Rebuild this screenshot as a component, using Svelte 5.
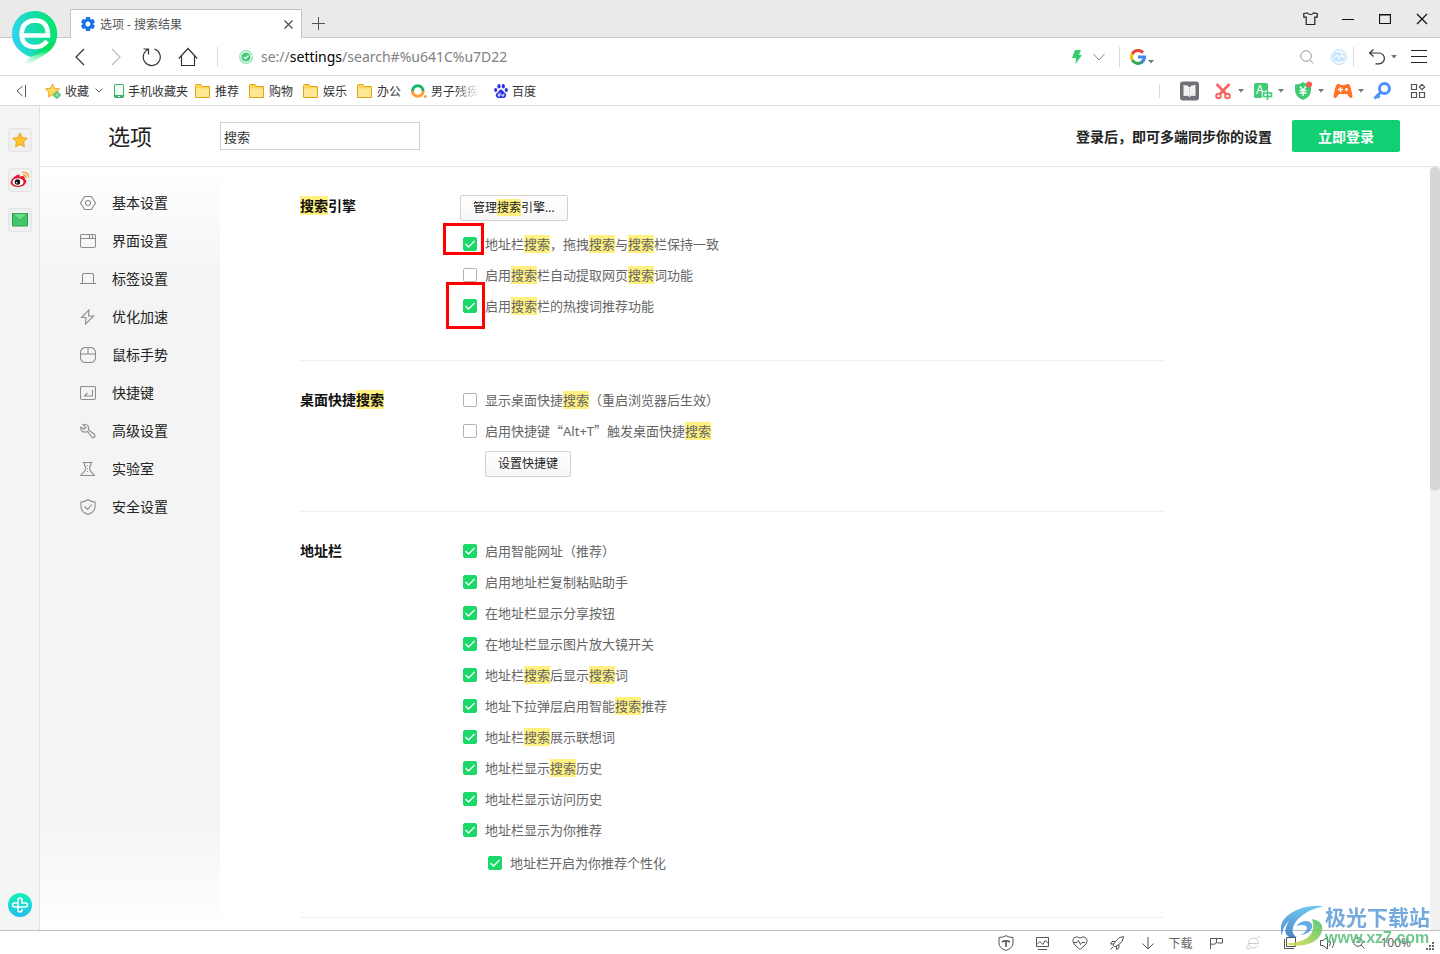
<script lang="ts">
  interface Option {
    text: string;
    checked: boolean;
    nested?: boolean;
    ring?: "wide" | "tall";
  }

  interface Section {
    title: string;
    before?: string;
    options: Option[];
    after?: string;
  }

  const menu = [
    { label: "基本设置", d: "M4.500 1.500h7l4 6.500-4 6.500h-7L.5 8zM8 5.500a2.500 2.500 0 1 0 0 5 2.500 2.500 0 0 0 0-5z" },
    { label: "界面设置", d: "M2 1.500h12q1.500 0 1.500 1.500v10q0 1.500-1.500 1.500H2Q.5 14.500.5 13V3Q.5 1.500 2 1.500zM.5 5.500h15M9.500 2v3M12.500 2v3" },
    { label: "标签设置", d: "M0 12.500h16M2.500 12V3.500q0-1 1-1h9q1 0 1 1V12" },
    { label: "优化加速", d: "M9 .8L1.500 8.500H6L5.500 15.200 13.500 7H8.500z" },
    { label: "鼠标手势", d: "M6 .5h4q5 0 5.500 5v5q-.5 5-5.500 5H6q-5 0-5.500-5v-5Q1 .5 6 .5zM.5 7h15M8 .5V7" },
    { label: "快捷键", d: "M2 1.500h12q1.500 0 1.500 1.500v10q0 1.500-1.500 1.500H2Q.5 14.500.5 13V3Q.5 1.500 2 1.500zM12.500 5v6h-8l3-3" },
    { label: "高级设置", d: "M3 1.700Q6 .5 8 3q1 2 .3 3.700l6 4.500q1.500 1.500 0 2.800t-2.700 0L7.500 8.500Q4.500 10 2 8 0 6 1 4l3 2.200L6 4.500z" },
    { label: "实验室", d: "M2.500 1.500h10M4.500 2v2.500l1 1V9L.8 14.500h13.500L9.800 9V5.500l1-1V2M7.500 4v1M7.500 7v1M7.500 10v1" },
    { label: "安全设置", d: "M8 .5Q11 3 15 3v5q0 5-7 7.500Q1 13 1 8V3q4 0 7-2.500zM4.500 7.500l3 3 4.500-5" },
  ];

  const folders = ["推荐", "购物", "娱乐", "办公"];

  let keyword = $state("搜索");
  let query = $state("");

  let sections: Section[] = $state([
    {
      title: "搜索引擎",
      before: "管理搜索引擎...",
      options: [
        { text: "地址栏搜索，拖拽搜索与搜索栏保持一致", checked: true, ring: "wide" },
        { text: "启用搜索栏自动提取网页搜索词功能", checked: false },
        { text: "启用搜索栏的热搜词推荐功能", checked: true, ring: "tall" },
      ],
    },
    {
      title: "桌面快捷搜索",
      options: [
        { text: "显示桌面快捷搜索（重启浏览器后生效）", checked: false },
        { text: "启用快捷键“Alt+T”触发桌面快捷搜索", checked: false },
      ],
      after: "设置快捷键",
    },
    {
      title: "地址栏",
      options: [
        { text: "启用智能网址（推荐）", checked: true },
        { text: "启用地址栏复制粘贴助手", checked: true },
        { text: "在地址栏显示分享按钮", checked: true },
        { text: "在地址栏显示图片放大镜开关", checked: true },
        { text: "地址栏搜索后显示搜索词", checked: true },
        { text: "地址下拉弹层启用智能搜索推荐", checked: true },
        { text: "地址栏搜索展示联想词", checked: true },
        { text: "地址栏显示搜索历史", checked: true },
        { text: "地址栏显示访问历史", checked: true },
        { text: "地址栏显示为你推荐", checked: true },
        { text: "地址栏开启为你推荐个性化", checked: true, nested: true },
      ],
    },
  ]);

  // full-width quotes have to come from the CJK font, so they get their own part
  function split(text: string) {
    return text.split(/(搜索|“|”)/).filter(Boolean);
  }
</script>

{#snippet highlighted(text: string)}{#each split(text) as part}{#if part === "搜索"}<mark>{part}</mark>{:else if part === "“" || part === "”"}<span class="quote">{part}</span>{:else}{part}{/if}{/each}{/snippet}

{#snippet caret()}
  <svg class="caret" width="6" height="4" viewBox="0 0 6 4"><path d="M0 0h6L3 3.500z" fill="#777" /></svg>
{/snippet}

<div class="window">
  <header class="titlebar">
    <svg class="logo" width="46" height="56" viewBox="0 0 46 56">
      <defs>
        <linearGradient id="lg" x1="0" y1="0.7" x2="1" y2="0.5">
          <stop offset="0" stop-color="#2fd3f3" />
          <stop offset="0.5" stop-color="#18dcb0" />
          <stop offset="1" stop-color="#03e56c" />
        </linearGradient>
        <linearGradient id="tail" x1="0.7" y1="0" x2="0.3" y2="1">
          <stop offset="0.2" stop-color="#03e060" />
          <stop offset="1" stop-color="#19e88a" stop-opacity="0" />
        </linearGradient>
      </defs>
      <path d="M23 0a22.500 22.500 0 0 1 15 39L18 46Q0 38 0 23A22.500 22.500 0 0 1 23 0z" fill="url(#lg)" />
      <path d="M44 30Q42 37 34 43 25 48 13 56l-3-2 23-21z" fill="url(#tail)" />
      <path d="M10 24.500h26Q36 9.500 23 9.500 10 10 9.500 23 10 36 23 36q8 0 12-6" fill="none" stroke="#fff" stroke-width="4.600" />
    </svg>
    <div class="tab">
      <svg width="14" height="14" viewBox="0 0 14 14">
        <path
          fill="#1a73e8"
          fill-rule="evenodd"
          d="M5.200 0h3.600l.5 2 .9.500 2-.6 1.800 3.100-1.500 1.400v1.200L14 9l-1.800 3.100-2-.6-.9.500-.5 2H5.200l-.5-2-.9-.5-2 .6L0 9l1.500-1.400V6.400L0 5l1.800-3.100 2 .6.9-.5zM7 4.500a2.500 2.500 0 1 0 0 5 2.500 2.500 0 0 0 0-5z" />
      </svg>
      <span class="tab-title">选项 - 搜索结果</span>
      <button class="tab-close" aria-label="关闭标签">
        <svg width="9" height="9" viewBox="0 0 9 9"><path d="M.5.5l8 8M8.500.5l-8 8" stroke="#444" stroke-width="1.100" /></svg>
      </button>
    </div>
    <button class="new-tab" aria-label="新标签">
      <svg width="13" height="13" viewBox="0 0 13 13"><path d="M6.500 0v13M0 6.500h13" stroke="#555" /></svg>
    </button>
    <div class="controls">
      <button aria-label="皮肤">
        <svg width="15" height="14" viewBox="0 0 15 14">
          <path d="M4.500 1L.8 1.500v3.700h2.400V12.500h8.600V5.200h2.400V1.500L10.500 1Q9.500 2.500 7.500 2.500T4.500 1z" fill="none" stroke="#222" stroke-width="1.200" />
        </svg>
      </button>
      <button aria-label="最小化">
        <svg width="12" height="12" viewBox="0 0 12 12"><path d="M0 6.500h12" stroke="#111" /></svg>
      </button>
      <button aria-label="最大化">
        <svg width="12" height="12" viewBox="0 0 12 12"><path d="M.5 1.500h11v9H.5zM0 2h12" fill="none" stroke="#111" stroke-width="1.200" /></svg>
      </button>
      <button aria-label="关闭">
        <svg width="12" height="12" viewBox="0 0 12 12"><path d="M1 1l10 10M11 1L1 11" stroke="#111" stroke-width="1.200" /></svg>
      </button>
    </div>
  </header>

  <div class="address">
    <nav class="history">
      <button aria-label="后退">
        <svg width="20" height="20" viewBox="0 0 20 20"><path d="M14 2L6 10l8 8" class="ink" /></svg>
      </button>
      <button aria-label="前进">
        <svg width="20" height="20" viewBox="0 0 20 20"><path d="M6 2l8 8-8 8" class="ink pale" /></svg>
      </button>
      <button aria-label="刷新">
        <svg width="20" height="20" viewBox="0 0 20 20"><path d="M12.500 2a8.500 8.500 0 1 1-6 .2M1.500 2h5v5.500" class="ink" /></svg>
      </button>
      <button aria-label="主页">
        <svg width="20" height="20" viewBox="0 0 20 20"><path d="M.8 11.500L10 1.500l9.200 10M3.500 9v9.500h13V9" class="ink" /></svg>
      </button>
    </nav>
    <i class="rule"></i>
    <svg class="secure" width="14" height="14" viewBox="0 0 14 14">
      <circle cx="7" cy="7" r="6.300" fill="none" stroke="#8ce2ab" stroke-width="1.200" />
      <circle cx="7" cy="7" r="4.600" fill="#43cb76" />
      <path d="M4.800 7l1.700 1.700L9.500 5.500" fill="none" stroke="#fff" stroke-width="1.200" />
    </svg>
    <div class="url" role="textbox" tabindex="0" aria-label="地址" contenteditable="true">se://<b>settings</b>/search#%u641C%u7D22</div>
    <button class="bolt" aria-label="极速模式">
      <svg width="10" height="14" viewBox="0 0 10 14"><path d="M3 0h6L7 5h3L3.500 14 4 8H0z" fill="#35cf70" /></svg>
      <svg width="12" height="8" viewBox="0 0 12 8"><path d="M.5 1L6 7l5.500-6" fill="none" stroke="#888" /></svg>
    </button>
    <i class="rule"></i>
    <form class="search">
      <button class="engine" type="button" aria-label="选择搜索引擎">
        <svg width="16" height="16" viewBox="0 0 16 16" fill="none" stroke-width="3">
          <path d="M13 3.700A6.500 6.500 0 0 0 2.300 5" stroke="#ea4335" />
          <path d="M2.300 5a6.500 6.500 0 0 0 0 6" stroke="#fbbc05" />
          <path d="M2.300 11a6.500 6.500 0 0 0 9.700 2" stroke="#34a853" />
          <path d="M11.500 13.500q3-2.500 3-5.500H8" stroke="#4285f4" />
        </svg>
        {@render caret()}
      </button>
      <input aria-label="搜索网页" bind:value={query} />
      <button class="glass" type="button" aria-label="搜索">
        <svg width="14" height="14" viewBox="0 0 14 14"><circle cx="6" cy="6" r="5.300" fill="none" stroke="#999" /><path d="M10 10l3.500 3.500" stroke="#999" /></svg>
      </button>
    </form>
    <svg class="swirl" width="16" height="16" viewBox="0 0 16 16" fill="none">
      <circle cx="8" cy="8" r="7.400" stroke="#b4dcfa" />
      <circle cx="8" cy="8" r="6" fill="#c3e2fb" />
      <path d="M3 9.500l3-3.500 2 4 2.500-4L13 8.500M5 3.500q4-2 7 1M4 12.500q4 2 7-.5" stroke="#fff" stroke-width="1.100" />
    </svg>
    <i class="rule"></i>
    <button class="undo" aria-label="恢复">
      <svg width="16" height="16" viewBox="0 0 16 16"><path d="M4.500.5l-4 3.500 4 3.500M.5 4H10a5.300 5.300 0 0 1 0 10.800H6.500" class="ink" /></svg>
      {@render caret()}
    </button>
    <button class="burger" aria-label="菜单">
      <svg width="16" height="14" viewBox="0 0 16 14"><path d="M0 .5h16M0 6.500h16M0 12.500h16" stroke="#222" /></svg>
    </button>
  </div>

  <div class="bookmarks">
    <button class="collapse" aria-label="收起">
      <svg width="10" height="12" viewBox="0 0 10 12"><path d="M6.500 1L1 6l5.500 5M9.500 0v12" fill="none" stroke="#555" /></svg>
    </button>
    <button class="mark-item">
      <svg width="16" height="16" viewBox="0 0 16 16">
        <path d="M7.500 1l2.100 4.300 4.900.7-3.500 3.300.8 4.700-4.300-2.200L3.200 14 4 9.300.5 6l4.900-.7z" fill="#ffd95e" stroke="#e9a52a" />
        <path d="M12 8.500v7M8.500 12h7" stroke="#2fb45c" stroke-width="3" />
        <path d="M12 9.500v5M9.500 12h5" stroke="#b6edc8" />
      </svg>
      <span>收藏</span>
      <svg class="down" width="8" height="5" viewBox="0 0 8 5"><path d="M.5.5L4 4 7.500.5" fill="none" stroke="#666" /></svg>
    </button>
    <a class="mark-item phone" href="#mobile">
      <svg width="10" height="14" viewBox="0 0 10 14">
        <rect width="10" height="14" rx="1.500" fill="#35b368" /><rect x="1" y="1" width="8" height="10" fill="#f0fbf4" /><path d="M4 12.500h2" stroke="#fff" />
      </svg>
      <span>手机收藏夹</span>
    </a>
    {#each folders as name}
      <a class="mark-item folder" href="#{name}">
        <svg width="16" height="14" viewBox="0 0 16 14">
          <path d="M.5 13.500V1.500q0-1 1-1H6l1.500 2h7v11z" fill="#ffd55a" stroke="#e0a313" />
          <path d="M1 4.500h13V13H1z" fill="#ffe894" />
        </svg>
        <span>{name}</span>
      </a>
    {/each}
    <a class="mark-item folder" href="#so">
      <svg width="16" height="14" viewBox="0 0 16 14" fill="none" stroke-width="3">
        <path d="M1.500 7a5.300 5.300 0 0 1 10.600 0" stroke="#16b46a" /><path d="M1.500 7a5.300 5.300 0 0 0 10.600 0" stroke="#ff9c33" /><circle cx="14.300" cy="12.500" r="1.500" fill="#ff9c33" stroke="none" />
      </svg>
      <span class="fade">男子残疾佣</span>
    </a>
    <a class="mark-item baidu" href="#baidu">
      <svg width="14" height="14" viewBox="0 0 14 14" fill="#2932e1">
        <ellipse cx="5" cy="2.300" rx="1.600" ry="2.200" /><ellipse cx="9.300" cy="2.300" rx="1.600" ry="2.200" />
        <ellipse cx="1.700" cy="6" rx="1.600" ry="2.100" /><ellipse cx="12.300" cy="6" rx="1.600" ry="2.100" />
        <path d="M7 5.500q1.500 0 2.500 2l2 2q1 1 .6 2.600-.7 2.100-3.100 1.800H5q-2.400.3-3.100-1.800Q1.500 10.500 2.500 9.500l2-2Q5.500 5.500 7 5.500z" />
        <path d="M6 8.500v3.500H4.200V10.300H6M8 10v2h1.800v-2.200" fill="none" stroke="#fff" stroke-width=".9" />
      </svg>
      <span>百度</span>
    </a>

    <div class="tools">
      <i class="rule"></i>
      <button class="book" aria-label="阅读">
        <svg width="20" height="20" viewBox="0 0 20 20">
          <rect width="19" height="19" y=".5" rx="3" fill="#6f7178" />
          <path d="M3.500 4l4 .5 2 2 2-2 4-.5v11l-4-.2-2 1.200-2-1.200-4 .2z" fill="#f2f2f2" /><path d="M9.500 6.500v9" stroke="#d4d4d4" />
        </svg>
      </button>
      <button class="tool" aria-label="截图">
        <svg width="20" height="20" viewBox="0 0 20 20" fill="none" stroke="#f9645f" stroke-width="2">
          <path d="M3.500 3l10 10.500M16.500 3l-10 10.500" stroke-width="2.600" /><circle cx="5.500" cy="15" r="2.300" /><circle cx="14.500" cy="15" r="2.300" />
        </svg>
        {@render caret()}
      </button>
      <button class="tool" aria-label="翻译">
        <svg width="20" height="20" viewBox="0 0 20 20">
          <rect x="1" y="2" width="14" height="15" rx="1.500" fill="#3ecb74" />
          <text x="3" y="13" font-size="12" fill="#fff">A</text>
          <path d="M14.500 9v10M10.500 12h8v3.500h-8z" fill="none" stroke="#fff" stroke-width="3.500" />
          <path d="M14.500 9v10M10.500 12h8v3.500h-8z" fill="none" stroke="#3ecb74" stroke-width="1.600" />
        </svg>
        {@render caret()}
      </button>
      <button class="tool" aria-label="网银">
        <svg width="20" height="20" viewBox="0 0 20 20">
          <path d="M10 1q3 2.500 8 2.500V9q0 7-8 10-8-3-8-10V3.500q5 0 8-2.500z" fill="#3ecb74" />
          <path d="M7 5.500l3 3.500 3-3.500M10 9v6M6.500 9.500h7M6.500 12h7" fill="none" stroke="#fff" stroke-width="1.300" /><circle cx="16" cy="3.500" r="3" fill="#ff5a52" />
        </svg>
        {@render caret()}
      </button>
      <button class="tool" aria-label="游戏">
        <svg width="20" height="20" viewBox="0 0 20 20">
          <path d="M5 3q2 0 3 1h4q1-1 3-1 2 0 3 5l1.500 7q0 2-1.500 2-1.500.2-4-4H6q-2.500 4.200-4 4-1.500 0-1.500-2L2 8q1-5 3-5z" fill="#ff7226" />
          <path d="M7.500 6v5M5 8.500h5" stroke="#fff" stroke-width="1.500" /><circle cx="13.500" cy="8.500" r="1.500" fill="#fff" />
        </svg>
        {@render caret()}
      </button>
      <button class="key" aria-label="密码">
        <svg width="20" height="20" viewBox="0 0 20 20" fill="none" stroke="#4d90fe">
          <circle cx="11.500" cy="7.500" r="5" stroke-width="3" /><path d="M8 11l-6.500 6.500M4 14.500l2.500 2" stroke-width="3" />
        </svg>
      </button>
      <button aria-label="扩展">
        <svg width="16" height="16" viewBox="0 0 16 16" fill="none" stroke="#555">
          <path d="M1.500 1.500h5v5h-5zM1.500 9.500h5v5h-5zM9.500 9.500h5v5h-5zM12 1.300L14.700 4 12 6.700 9.300 4z" stroke-width="1.200" />
        </svg>
      </button>
    </div>
  </div>

  <div class="body">
    <aside class="rail">
      <button class="tile" aria-label="收藏夹">
        <svg width="16" height="16" viewBox="0 0 16 16"><path d="M8 1l2.200 4.600 5 .7-3.700 3.500.9 5L8 12.400l-4.400 2.400.9-5L.8 6.300l5-.7z" fill="#ffc629" stroke="#f39b27" /></svg>
      </button>
      <button class="tile" aria-label="微博">
        <svg width="20" height="18" viewBox="0 0 20 18">
          <path d="M7 4q2-1 2.500 0t0 2q3-1.500 4.500-.5t.5 2.500q2.500 1 1.500 3.500-1.500 4-7.500 4.500-6.500 0-8-4Q.5 8 7 4z" fill="#e6162d" />
          <ellipse cx="8" cy="11" rx="5.500" ry="3.800" fill="#fff" /><circle cx="7.500" cy="11" r="2.700" fill="#111" /><circle cx="6.700" cy="11.700" r=".8" fill="#fff" />
          <path d="M13 4q3-.5 3 3M12.500 1.500q6-.8 6.200 5" fill="none" stroke="#ff9933" stroke-width="1.400" />
        </svg>
      </button>
      <button class="tile" aria-label="邮箱">
        <svg width="16" height="14" viewBox="0 0 16 14"><path d="M.5.5h15v12.500H.5z" fill="#44c76b" stroke="#27a24c" /><path d="M.5.5L8 7.500 15.500.5z" fill="#6bdc8c" stroke="#27a24c" stroke-width=".8" /></svg>
      </button>
      <button class="add" aria-label="添加">
        <svg width="24" height="24" viewBox="0 0 24 24">
          <defs><linearGradient id="ag" x2="0" y2="1"><stop stop-color="#12f3b4" /><stop offset="1" stop-color="#21bdf0" /></linearGradient></defs>
          <circle cx="12" cy="12" r="12" fill="url(#ag)" />
          <path d="M10 14V7q0-2 2-2t2 2v3h3q2.500 0 2.500 2T17 14H7q-2.500 0-2.500-2T7 10h3M10 14v3q0 2 2 2t2-2v-1" fill="none" stroke="#fff" stroke-width="1.500" />
        </svg>
      </button>
    </aside>

    <main class="page">
      <div class="page-head">
        <h1>选项</h1>
        <input class="filter" aria-label="搜索选项" bind:value={keyword} />
        <span class="hint">登录后，即可多端同步你的设置</span>
        <button class="login">立即登录</button>
      </div>

      <div class="columns">
        <nav class="menu">
          {#each menu as item}
            <a href="#{item.label}">
              <svg width="16" height="16" viewBox="0 0 16 16" fill="none" stroke="#8c8c8c" stroke-width="1.100"><path d={item.d} /></svg>
              {item.label}
            </a>
          {/each}
        </nav>

        <div class="settings">
          {#each sections as section}
            <section>
              <h2>{@render highlighted(section.title)}</h2>
              <div class="fields">
                {#if section.before}
                  <button class="plain before">{@render highlighted(section.before)}</button>
                {/if}
                <ul>
                  {#each section.options as option}
                    <li class:nested={option.nested}>
                      <label>
                        <input type="checkbox" bind:checked={option.checked} />
                        <span>{@render highlighted(option.text)}</span>
                      </label>
                      {#if option.ring}
                        <i class="ring {option.ring}"></i>
                      {/if}
                    </li>
                  {/each}
                </ul>
                {#if section.after}
                  <button class="plain after">{section.after}</button>
                {/if}
              </div>
            </section>
          {/each}
        </div>
        <div class="track"><div class="thumb"></div></div>
      </div>
    </main>
  </div>

  <footer class="status">
    <button aria-label="安全">
      <svg width="16" height="16" viewBox="0 0 16 16"><path d="M8 .7Q11 2.500 15 2.500V8q0 5-7 7.500Q1 13 1 8V2.500q4 0 7-1.800z" class="line" /><path d="M4 7q4-2.500 8 0M8 5.500V12" class="line thick" /></svg>
    </button>
    <button aria-label="图片">
      <svg width="16" height="16" viewBox="0 0 16 16"><path d="M1.500 2.500h12v9h-12zM2 9.500l3-3 3 3 2-4 3.500 3M3 14.500h9" class="line" /></svg>
    </button>
    <button aria-label="医生">
      <svg width="16" height="16" viewBox="0 0 16 16"><path d="M8 14.500L2 9Q-.5 5.500 2 3t6 0q3.500-2.500 6 0t0 6zM1 7.500h4l1.500-2 2 4 1.500-2h3" class="line" /></svg>
    </button>
    <button aria-label="加速">
      <svg width="16" height="16" viewBox="0 0 16 16"><path d="M14.500 1.500q-5 0-8 5L4 10l2 2 4-2.500q4.500-3 4.500-8zM6.500 6.500H3L1.500 9H5M10 9.500V13l-2.500 1.500V11M4 12l-2.500 2.500" class="line" /></svg>
    </button>
    <button class="download">
      <svg width="14" height="14" viewBox="0 0 14 14"><path d="M7 1v12M1.500 7.500L7 13l5.500-5.500" class="line" /></svg>
      下载
    </button>
    <button aria-label="旗帜">
      <svg width="16" height="16" viewBox="0 0 16 16"><path d="M2.500 14V3.500h12V8h-5l-1-1V3.500M2.500 9q6 1 6-2" class="line" /></svg>
    </button>
    <button aria-label="兼容模式">
      <svg width="16" height="16" viewBox="0 0 16 16"><path d="M4 8.500h9.500Q13 3 8.500 3 3.500 3.500 3.500 8.500q.5 4.500 5 4.500 3 0 4.500-2.500M12 3Q15 .5 15 3M3 10q-4 5 2 3.500" class="line faint" /></svg>
    </button>
    <button aria-label="窗口">
      <svg width="16" height="16" viewBox="0 0 16 16"><path d="M4.500 2.500h9v9h-9zM2.500 4v9.500H12" class="line" /></svg>
    </button>
    <button aria-label="声音">
      <svg width="16" height="16" viewBox="0 0 16 16"><path d="M1.500 5.500H4L8.500 2v12L4 10.500H1.500zM10.500 5q2 3 0 6M13 3q3.500 5 0 10" class="line" /></svg>
    </button>
    <button class="zoom">
      <svg width="12" height="12" viewBox="0 0 12 12"><path d="M5 .7a4.300 4.300 0 1 0 0 8.600A4.300 4.300 0 0 0 5 .7zM8 8l3.500 3.500M3 5h4" class="line" /></svg>
      100%
    </button>
    <svg class="grip" width="9" height="9" viewBox="0 0 9 9" fill="#666">
      <path d="M6 0h2v2H6zM3 3h2v2H3zM6 3h2v2H6zM0 6h2v2H0zM3 6h2v2H3zM6 6h2v2H6z" />
    </svg>
  </footer>

  <div class="brand">
    <svg width="44" height="42" viewBox="0 0 44 42">
      <defs>
        <linearGradient id="b1" x2="0" y2="1"><stop stop-color="#55c2ec" /><stop offset="1" stop-color="#2f71c4" /></linearGradient>
        <linearGradient id="b2" x1="1" x2="0" y2="1"><stop stop-color="#3fc06c" /><stop offset="1" stop-color="#e3dc3c" /></linearGradient>
      </defs>
      <path d="M43 1Q28 4 18 13q-8 8-6 15 1 3 4 4-8 2-11-3-2-5 3-13-7 6-7 15Q-4 17 10 8 24-1 43 1z" fill="url(#b1)" />
      <path d="M31 14q12 2 10 12-3 11-18 14-13 2-18-2 12 1 21-5 9-7 5-19z" fill="url(#b2)" />
      <path d="M15 21q7-7 14-4 5 4-1 10-4 3-9 3 7-3 7-7-1-5-11-2z" fill="#4a9de0" />
    </svg>
    <div>
      <strong>极光下载站</strong>
      <em>www.xz7.com</em>
    </div>
  </div>
</div>

<style>
  :global(body) {
    margin: 0;
    overflow: hidden;
    background: #fff;
  }

  .window {
    position: relative;
    height: 100vh;
    display: flex;
    flex-direction: column;
    font: 12px "Noto Sans", "Noto Sans CJK SC", sans-serif;
    color: #333;
  }

  button {
    display: flex;
    align-items: center;
    justify-content: center;
    padding: 0;
    border: 0;
    background: none;
    font: inherit;
    color: inherit;
    cursor: pointer;
  }

  a {
    color: inherit;
    text-decoration: none;
  }

  svg {
    display: block;
    flex: none;
  }

  .rule {
    width: 1px;
    height: 20px;
    background: #d9d9d9;
  }

  .ink {
    fill: none;
    stroke: #333;
    stroke-width: 1.2;
  }

  .pale {
    stroke: #bbb;
  }

  .titlebar {
    display: flex;
    align-items: flex-end;
    height: 37px;
    padding-left: 70px;
    background: #eaeaea;
    border-bottom: 1px solid #c8c8c8;
  }

  .logo {
    position: absolute;
    top: 11px;
    left: 12px;
  }

  .tab {
    display: flex;
    align-items: center;
    gap: 5px;
    box-sizing: border-box;
    width: 232px;
    height: 29px;
    margin-bottom: -1px;
    padding: 0 8px 0 10px;
    background: #fff;
    border: 1px solid #c4c4c4;
    border-bottom: 0;
    color: #555;
  }

  .tab-close {
    margin-left: auto;
  }

  .new-tab {
    width: 33px;
    height: 28px;
  }

  .controls {
    display: flex;
    align-self: stretch;
    margin-left: auto;
  }

  .controls button {
    width: 37px;
  }

  .address {
    display: flex;
    align-items: center;
    height: 37px;
    padding: 0 13px 0 62px;
    border-bottom: 1px solid #ddd;
  }

  .history {
    display: flex;
    margin-right: 11px;
  }

  .history button {
    width: 36px;
    height: 36px;
  }

  .secure {
    margin: 0 8px 0 21px;
  }

  .url {
    flex: 1;
    font-size: 14px;
    color: #808080;
    outline: 0;
  }

  .url b {
    font-weight: 400;
    color: #000;
  }

  .bolt {
    gap: 11px;
    margin-right: 14px;
  }

  .search {
    display: flex;
    align-items: center;
    margin: 0 17px 0 10px;
  }

  .search input {
    width: 130px;
    border: 0;
    outline: 0;
  }

  .engine {
    gap: 2px;
  }

  .engine .caret {
    margin-top: 10px;
  }

  .glass {
    margin-left: 12px;
  }

  .swirl {
    margin-right: 6px;
  }

  .undo {
    gap: 6px;
    margin: 0 14px 0 15px;
  }

  .bookmarks {
    display: flex;
    align-items: center;
    gap: 7px;
    height: 29px;
    padding: 0 14px 0 16px;
    border-bottom: 1px solid #ddd;
  }

  .collapse {
    margin-right: 12px;
  }

  .mark-item {
    display: flex;
    align-items: center;
    gap: 4px;
    white-space: nowrap;
  }

  .down {
    margin: 0 4px 0 2px;
  }

  .folder {
    padding-right: 3px;
  }

  .fade {
    width: 48px;
    overflow: hidden;
    mask-image: linear-gradient(to right, #000 50%, transparent);
  }

  .baidu {
    padding-left: 5px;
  }

  .tools {
    display: flex;
    align-items: center;
    margin-left: auto;
  }

  .tools .rule {
    height: 14px;
  }

  .book {
    margin: 0 13px 0 20px;
  }

  .tool {
    gap: 5px;
    width: 31px;
    margin-right: 9px;
  }

  .key {
    margin-right: 17px;
  }

  .body {
    flex: 1;
    min-height: 0;
    display: flex;
  }

  .rail {
    display: flex;
    flex-direction: column;
    align-items: center;
    gap: 16px;
    box-sizing: border-box;
    width: 40px;
    padding: 22px 0 13px;
    background: #f4f6f6;
    border-right: 1px solid #e2e2e2;
  }

  .tile {
    box-sizing: border-box;
    width: 24px;
    height: 24px;
    border: 1px solid #e4e4e4;
    border-radius: 3px;
    background: #f0f0f0;
  }

  .add {
    margin-top: auto;
  }

  .page {
    flex: 1;
    min-width: 0;
    display: flex;
    flex-direction: column;
  }

  .page-head {
    display: flex;
    align-items: center;
    height: 60px;
    padding: 0 40px 0 68px;
    border-bottom: 1px solid #e6e6e6;
  }

  h1 {
    width: 112px;
    margin: 0;
    font-size: 22px;
    font-weight: 400;
    line-height: 32px;
    color: #222;
  }

  .filter {
    box-sizing: border-box;
    width: 200px;
    height: 28px;
    padding: 0 3px;
    border: 1px solid #d0d0d0;
    font: inherit;
    font-size: 13px;
    color: #333;
  }

  .hint {
    margin-left: auto;
    font-size: 14px;
    font-weight: 700;
    color: #222;
  }

  .login {
    width: 108px;
    height: 32px;
    margin-left: 20px;
    border-radius: 2px;
    background: #11cf73;
    font-size: 14px;
    font-weight: 700;
    color: #fff;
  }

  .columns {
    flex: 1;
    min-height: 0;
    display: flex;
  }

  .menu {
    box-sizing: border-box;
    width: 180px;
    padding: 17px 0 0 40px;
    background: linear-gradient(#fff, #f4f4f4 15%, #f4f4f4 85%, #fff);
  }

  .menu a {
    display: flex;
    align-items: center;
    gap: 16px;
    height: 38px;
    font-size: 14px;
    line-height: 20px;
    color: #222;
  }

  .settings {
    flex: 1;
    overflow: hidden;
    padding-left: 80px;
  }

  section {
    display: flex;
    max-width: 864px;
    padding: 23px 0 34px;
    border-bottom: 1px solid #f0f0f0;
  }

  h2 {
    width: 160px;
    margin: 0;
    font-size: 14px;
    font-weight: 700;
    line-height: 32px;
    color: #111;
  }

  mark {
    background: #fff07f;
    color: inherit;
  }

  .quote {
    font-family: "Noto Sans CJK SC", sans-serif;
    line-height: 1;
  }

  ul {
    margin: 0 0 5px;
    padding: 0;
    list-style: none;
  }

  li {
    position: relative;
  }

  li.nested {
    margin-top: 2px;
    padding-left: 25px;
  }

  label {
    display: flex;
    align-items: center;
    gap: 8px;
    height: 31px;
    padding-left: 3px;
    font-size: 13px;
    color: #666;
  }

  input[type="checkbox"] {
    appearance: none;
    width: 14px;
    height: 14px;
    margin: 0;
    border: 1px solid #b4b4b4;
    border-radius: 2px;
    background: #fff;
  }

  input[type="checkbox"]:checked {
    border-color: #1bd968;
    background: #1bd968
      url("data:image/svg+xml,%3Csvg xmlns='http://www.w3.org/2000/svg' viewBox='0 0 12 12'%3E%3Cpath d='M1.500 6l3 3 6-6' fill='none' stroke='white' stroke-width='1.300'/%3E%3C/svg%3E");
  }

  .ring {
    position: absolute;
    box-sizing: border-box;
    border: 3px solid #f00;
    pointer-events: none;
  }

  .ring.wide {
    top: -5px;
    left: -17px;
    width: 41px;
    height: 32px;
  }

  .ring.tall {
    top: -8px;
    left: -14px;
    width: 39px;
    height: 47px;
  }

  .plain {
    display: block;
    height: 26px;
    padding: 0 12px;
    border: 1px solid #d2d2d2;
    border-radius: 2px;
    background: linear-gradient(#fff, #f7f7f7);
    line-height: 24px;
    color: #222;
  }

  .before {
    margin: 5px 0 7px;
  }

  .after {
    margin-left: 25px;
  }

  .track {
    width: 10px;
    background: #f1f1f1;
  }

  .thumb {
    height: 42.5%;
    border-radius: 5px;
    background: #d6d6d6;
  }

  .status {
    display: flex;
    align-items: center;
    justify-content: flex-end;
    gap: 21px;
    height: 23px;
    padding-right: 5px;
    border-top: 1px solid #bdbdbd;
    color: #666;
  }

  .line {
    fill: none;
    stroke: #555;
  }

  .thick {
    stroke-width: 1.6;
  }

  .faint {
    stroke: #ccc;
  }

  .download {
    gap: 13px;
    margin: 0 -5px;
  }

  .zoom {
    gap: 15px;
    margin: 0 -6px 0 -3px;
  }

  .grip {
    align-self: flex-end;
    margin-bottom: 3px;
  }

  .brand {
    position: absolute;
    right: 10px;
    bottom: 7px;
    display: flex;
    opacity: 0.85;
    pointer-events: none;
  }

  .brand strong,
  .brand em {
    display: block;
    font-style: normal;
    font-weight: 700;
    white-space: nowrap;
  }

  .brand strong {
    font-size: 21px;
    line-height: 24px;
    color: #5b9bd8;
  }

  .brand em {
    font-family: "Liberation Sans", sans-serif;
    font-size: 16px;
    line-height: 18px;
    color: #55bf78;
  }
</style>
